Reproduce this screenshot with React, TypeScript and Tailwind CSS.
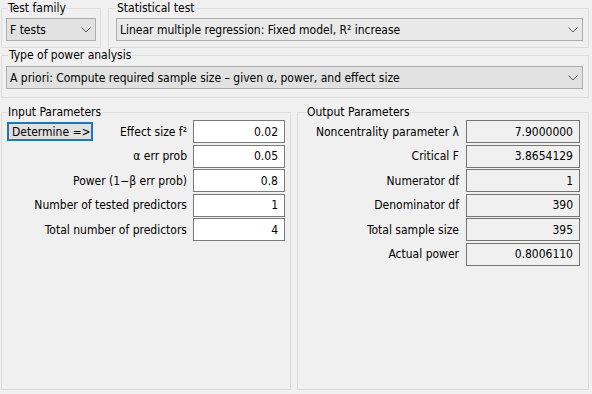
import React from "react";

function Chevron() {
  return (
    <svg width="10" height="6" viewBox="0 0 10 6" className="shrink-0 mr-[4px]">
      <polyline points="0.5,0.5 5,5 9.5,0.5" fill="none" stroke="#5a5a5a" strokeWidth="1" />
    </svg>
  );
}

function Dropdown({ text, bg }: { text: string; bg: string }) {
  return (
    <div className={bg}>
      <span className="flex-1 whitespace-nowrap overflow-hidden pl-[3px]">{text}</span>
      <Chevron />
    </div>
  );
}

const ddBase = "h-[23px] border border-[#adadad] flex items-center ";

function InputRow({ label, value, left }: { label: string; value: string; left?: React.ReactNode }) {
  return (
    <div className="flex items-center h-[23px]">
      <div className="flex-1 flex items-center">{left}</div>
      <span className="whitespace-nowrap">{label}</span>
      <div className="ml-[6px] w-[92px] h-[23px] bg-white border border-[#7a7a7a] flex items-center justify-end pr-[6px]">
        {value}
      </div>
    </div>
  );
}

function OutputRow({ label, value }: { label: string; value: string }) {
  return (
    <div className="flex items-center justify-end h-[23px]">
      <span className="whitespace-nowrap">{label}</span>
      <div className="ml-[7px] w-[114px] h-[23px] bg-[#f0f0f0] border border-[#747474] flex items-center justify-end pr-[6px]">
        {value}
      </div>
    </div>
  );
}

export default function App() {
  return (
    <div className="w-[592px] h-[394px] bg-[#f0f0f0] text-black text-[12px] leading-[14px] font-['DejaVu_Sans_Condensed','Liberation_Sans',sans-serif] pl-[1px] pr-[3px] pt-[1px] pb-[4px] flex flex-col overflow-hidden">
      <div className="flex gap-[7px]">
        <fieldset className="w-[100px] border border-[#dcdcdc] pl-[4px] pr-[4px] pt-[3px] pb-[6px] m-0 min-w-0">
          <legend className="ml-[1px] px-[1px]">Test family</legend>
          <Dropdown text="F tests" bg={ddBase + "bg-[#e1e1e1]"} />
        </fieldset>
        <fieldset className="flex-1 border border-[#dcdcdc] pl-[7px] pr-[5px] pt-[3px] pb-[6px] m-0 min-w-0">
          <legend className="ml-0 px-[1px]">Statistical test</legend>
          <Dropdown text="Linear multiple regression: Fixed model, R² increase" bg={ddBase + "bg-[#e9e9e9]"} />
        </fieldset>
      </div>
      <fieldset className="border border-[#dcdcdc] pl-[4px] pr-[5px] pt-[4px] pb-[8px] m-0 min-w-0">
        <legend className="ml-[2px] px-[1px]">Type of power analysis</legend>
        <Dropdown
          text="A priori: Compute required sample size – given α, power, and effect size"
          bg={ddBase + "bg-[#e1e1e1]"}
        />
      </fieldset>
      <div className="flex gap-[6px] mt-[7px] flex-1 min-h-0">
        <fieldset className="w-[290px] border border-[#dcdcdc] pl-0 pr-[5px] pt-[1px] m-0 min-w-0">
          <legend className="ml-[5px] px-[1px]">Input Parameters</legend>
          <div className="flex flex-col gap-[1.6px]">
            <InputRow
              label="Effect size f²"
              value="0.02"
              left={
                <div className="ml-[5px] w-[86px] h-[19px] border-2 border-[#1f78b4] bg-[#e1e1e1] flex items-center pl-[3px]">
                  Determine =&gt;
                </div>
              }
            />
            <InputRow label="α err prob" value="0.05" />
            <InputRow label="Power (1−β err prob)" value="0.8" />
            <InputRow label="Number of tested predictors" value="1" />
            <InputRow label="Total number of predictors" value="4" />
          </div>
        </fieldset>
        <fieldset className="flex-1 border border-[#dcdcdc] pl-0 pr-[8px] pt-[1px] m-0 min-w-0">
          <legend className="ml-[8px] px-[1px]">Output Parameters</legend>
          <div className="flex flex-col gap-[1.6px]">
            <OutputRow label="Noncentrality parameter λ" value="7.9000000" />
            <OutputRow label="Critical F" value="3.8654129" />
            <OutputRow label="Numerator df" value="1" />
            <OutputRow label="Denominator df" value="390" />
            <OutputRow label="Total sample size" value="395" />
            <OutputRow label="Actual power" value="0.8006110" />
          </div>
        </fieldset>
      </div>
    </div>
  );
}
